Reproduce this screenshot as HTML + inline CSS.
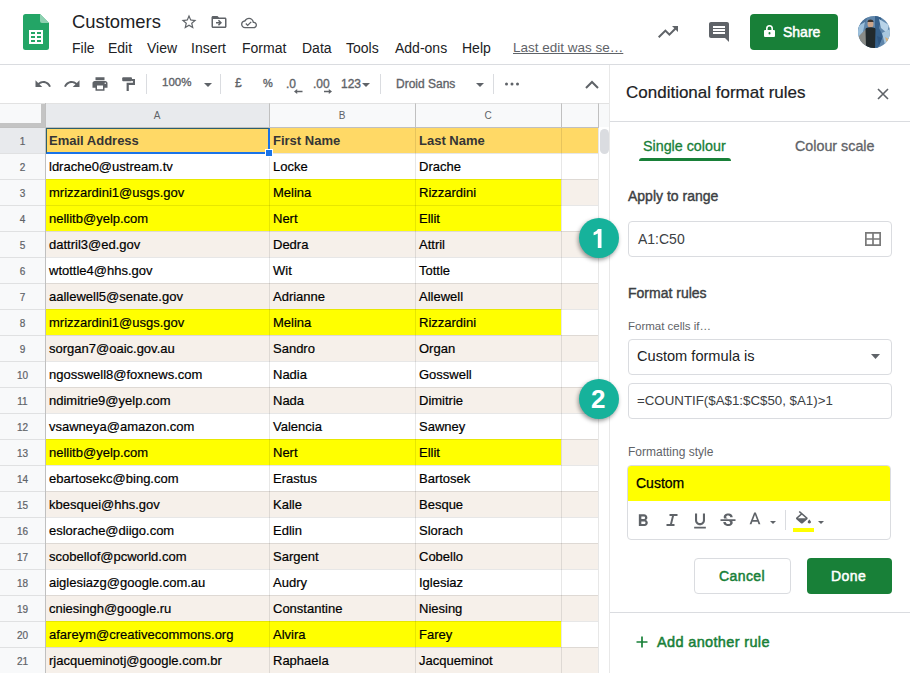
<!DOCTYPE html>
<html><head><meta charset="utf-8">
<style>
*{box-sizing:border-box;margin:0;padding:0}
html,body{width:910px;height:673px;overflow:hidden;background:#fff;font-family:"Liberation Sans",sans-serif;position:relative}
.a{position:absolute;white-space:nowrap}
.menu{top:40px;font-size:14px;color:#202124;line-height:16px}
.tb{position:absolute;color:#5f6368;white-space:nowrap}
.ic{position:absolute;fill:#5f6368}
.cell{position:absolute;font-size:13px;color:#000;line-height:27px;-webkit-text-stroke:0.2px #000;padding-left:4px;white-space:nowrap;overflow:hidden}
.hdr{font-weight:bold;color:#353535;line-height:28px;-webkit-text-stroke:0 #000}
.rh{position:absolute;left:0;width:45px;text-align:center;font-size:10px;color:#5f6368;line-height:29px;-webkit-text-stroke:0.2px #5f6368}
.ch{position:absolute;top:104px;height:23px;text-align:center;font-size:10px;color:#5f6368;line-height:23px}
.box{position:absolute;border:1px solid #dadce0;border-radius:4px;background:#fff}
.lbl{position:absolute;font-size:14px;color:#3c4043;white-space:nowrap;-webkit-text-stroke:0.4px #3c4043;line-height:16px}
.med{-webkit-text-stroke:0.35px currentColor}
</style></head><body>

<!-- Sheets logo -->
<svg class="a" style="left:23px;top:14px" width="26" height="36" viewBox="0 0 26 36">
<path d="M0 2.5Q0 0 2.5 0H17L26 9V33.5Q26 36 23.5 36H2.5Q0 36 0 33.5Z" fill="#23a566"/>
<path d="M17 0L26 9H19Q17 9 17 7Z" fill="#8ed1b1"/>
<rect x="6" y="16" width="14" height="14" fill="#fff"/>
<rect x="8" y="18" width="4" height="2" fill="#23a566"/><rect x="14" y="18" width="4" height="2" fill="#23a566"/>
<rect x="8" y="22" width="4" height="2" fill="#23a566"/><rect x="14" y="22" width="4" height="2" fill="#23a566"/>
<rect x="8" y="26" width="4" height="2" fill="#23a566"/><rect x="14" y="26" width="4" height="2" fill="#23a566"/>
</svg>

<div class="a" style="left:72px;top:11px;font-size:18.4px;color:#202124">Customers</div>
<!-- star / folder / cloud -->
<svg class="ic" style="left:180px;top:13px" width="18" height="18" viewBox="0 0 24 24"><path d="M22 9.24l-7.19-.62L12 2 9.19 8.63 2 9.24l5.46 4.73L5.82 21 12 17.27 18.18 21l-1.63-7.03L22 9.24zM12 15.4l-3.76 2.27 1-4.28-3.32-2.88 4.38-.38L12 6.1l1.71 4.04 4.38.38-3.32 2.88 1 4.28L12 15.4z"/></svg>
<svg class="ic" style="left:210px;top:13px" width="18" height="18" viewBox="0 0 24 24"><path d="M20 6h-8l-2-2H4c-1.1 0-2 .9-2 2v12c0 1.1.9 2 2 2h16c1.1 0 2-.9 2-2V8c0-1.1-.9-2-2-2zm0 12H4V8h16v10zM12.16 12H8v2h4.16l-1.59 1.59L11.99 17 16 13.01 11.99 9l-1.41 1.41z"/></svg>
<svg class="ic" style="left:241px;top:14.5px" width="16" height="16" viewBox="0 0 24 24"><path d="M19.35 10.04C18.67 6.59 15.64 4 12 4 9.11 4 6.6 5.64 5.35 8.04 2.34 8.36 0 10.91 0 14c0 3.31 2.69 6 6 6h13c2.76 0 5-2.24 5-5 0-2.64-2.05-4.78-4.65-4.96zM19 18H6c-2.21 0-4-1.79-4-4 0-2.05 1.53-3.76 3.56-3.97l1.07-.11.5-.95C8.08 7.14 9.94 6 12 6c2.62 0 4.88 1.86 5.39 4.43l.3 1.5 1.53.11c1.56.1 2.78 1.41 2.78 2.96 0 1.65-1.35 3-3 3zm-9-3.82l-2.09-2.09L6.5 13.5 10 17l6.01-6.01-1.41-1.41z"/></svg>

<div class="a menu" style="left:72px">File</div>
<div class="a menu" style="left:108px">Edit</div>
<div class="a menu" style="left:147px">View</div>
<div class="a menu" style="left:191px">Insert</div>
<div class="a menu" style="left:242px">Format</div>
<div class="a menu" style="left:302px">Data</div>
<div class="a menu" style="left:346px">Tools</div>
<div class="a menu" style="left:395px">Add-ons</div>
<div class="a menu" style="left:462px">Help</div>
<div class="a menu" style="left:513px;color:#5f6368;text-decoration:underline;font-size:13.5px">Last edit was se…</div>

<!-- right header icons -->
<svg class="ic" style="left:656px;top:20px" width="24" height="24" viewBox="0 0 24 24"><path d="M16 6l2.29 2.29-4.88 4.88-4-4L2 16.59 3.41 18l6-6 4 4 6.3-6.29L22 12V6z"/></svg>
<svg class="ic" style="left:707px;top:20px" width="24" height="24" viewBox="0 0 24 24"><path d="M21.99 4c0-1.1-.89-2-1.99-2H4c-1.1 0-2 .9-2 2v12c0 1.1.9 2 2 2h14l4 4-.01-18zM18 14H6v-2h12v2zm0-3H6V9h12v2zm0-3H6V6h12v2z"/></svg>

<!-- share -->
<div class="a" style="left:750px;top:14px;width:88px;height:36px;background:#188038;border-radius:4px"></div>
<svg class="a" style="left:764px;top:25px" width="11" height="12" viewBox="0 0 11 12"><path d="M2 5V3.5Q2 0 5.5 0T9 3.5V5H10Q11 5 11 6V11Q11 12 10 12H1Q0 12 0 11V6Q0 5 1 5ZM3.6 5H7.4V3.5Q7.4 1.6 5.5 1.6T3.6 3.5ZM5.5 7Q4.5 7 4.5 8.2T5.5 9.4T6.5 8.2T5.5 7Z" fill="#fff"/></svg>
<div class="a med" style="left:783px;top:24px;font-size:14px;color:#fff;line-height:16px;-webkit-text-stroke:0.5px #fff">Share</div>
<svg class="a" style="left:858px;top:16px" width="32" height="32" viewBox="0 0 32 32">
<defs><clipPath id="av"><circle cx="16" cy="16" r="16"/></clipPath></defs>
<g clip-path="url(#av)">
<rect width="32" height="32" fill="#5f86ab"/>
<path d="M0 0H10L6 10 0 14Z" fill="#4d7399"/>
<path d="M0 10L7 6 5 16 0 22Z" fill="#9cc0dc"/>
<path d="M1 20L8 13 8 32H0Z" fill="#8a8c88"/>
<path d="M17 0H24L21 12 25 20 20 32H17Z" fill="#36618c"/>
<path d="M21 3L31 9 29 17 23 12Z" fill="#b8d3e8"/>
<path d="M24 17L32 13V26L27 29Z" fill="#a9c8df"/>
<path d="M19 20L24 22 21 30Z" fill="#2d5580"/>
<path d="M27 21L31 23 29 27Z" fill="#d8b27c"/>
<ellipse cx="12.5" cy="8" rx="3" ry="3.5" fill="#caa48a"/>
<path d="M9.3 6Q10 3.6 12.5 3.6T15.7 6Z" fill="#3a332e"/>
<path d="M7.5 13Q8 11.4 12.5 11.2T17.5 13L17 32H8Z" fill="#222a2d"/>
</g></svg>

<!-- toolbar line -->
<div class="a" style="left:0;top:64px;width:910px;height:1px;background:#dadce0"></div>

<!-- toolbar -->
<svg class="ic" style="left:34px;top:75px" width="18" height="18" viewBox="0 0 24 24"><path d="M12.5 8c-2.65 0-5.05.99-6.9 2.6L2 7v9h9l-3.62-3.62c1.39-1.16 3.16-1.88 5.12-1.88 3.54 0 6.550 2.31 7.6 5.5l2.37-.78C21.08 11.03 17.15 8 12.5 8z"/></svg>
<svg class="ic" style="left:63px;top:75px" width="18" height="18" viewBox="0 0 24 24"><path d="M18.4 10.6C16.55 8.99 14.15 8 11.5 8c-4.65 0-8.58 3.03-9.96 7.22L3.9 16c1.05-3.19 4.05-5.5 7.6-5.5 1.95 0 3.73.72 5.12 1.88L13 16h9V7l-3.6 3.6z"/></svg>
<svg class="ic" style="left:91px;top:75px" width="18" height="18" viewBox="0 0 24 24"><path d="M19 8H5c-1.66 0-3 1.34-3 3v6h4v4h12v-4h4v-6c0-1.66-1.34-3-3-3zm-3 11H8v-5h8v5zm3-7c-.55 0-1-.45-1-1s.45-1 1-1 1 .45 1 1-.45 1-1 1zm-1-9H6v4h12V3z"/></svg>
<svg class="ic" style="left:121px;top:76px" width="16" height="16" viewBox="0 0 16 16"><rect x="1.2" y="1.2" width="9.8" height="4" rx="1"/><path d="M11 3H14V9H7.8V15H5.6V6.8H11.9V5H11Z"/></svg>
<div class="a" style="left:146px;top:74px;width:1px;height:20px;background:#dadce0"></div>
<div class="tb med" style="left:162px;top:76px;font-size:11.5px">100%</div>
<svg class="ic" style="left:204px;top:83px" width="8" height="4" viewBox="0 0 8 4"><path d="M0 0H8L4 4Z"/></svg>
<div class="a" style="left:220px;top:74px;width:1px;height:20px;background:#dadce0"></div>
<div class="tb med" style="left:235px;top:76px;font-size:12px">£</div>
<div class="tb med" style="left:263px;top:77px;font-size:11px">%</div>
<div class="tb med" style="left:286px;top:77px;font-size:12px">.0</div>
<div class="tb med" style="left:313px;top:77px;font-size:12px">.00</div>
<svg class="ic" style="left:294px;top:89px" width="9" height="5" viewBox="0 0 9 5"><path d="M0 2.5L3.2 0V1.7H8.5V3.3H3.2V5Z"/></svg>
<svg class="ic" style="left:324px;top:89px" width="8" height="5" viewBox="0 0 8 5"><path d="M8 2.5L4.8 0V1.7H0V3.3H4.8V5Z"/></svg>
<div class="tb med" style="left:341px;top:77px;font-size:12px">123</div>
<svg class="ic" style="left:362px;top:83px" width="8" height="4" viewBox="0 0 8 4"><path d="M0 0H8L4 4Z"/></svg>
<div class="a" style="left:380px;top:74px;width:1px;height:20px;background:#dadce0"></div>
<div class="tb med" style="left:396px;top:77px;font-size:12px">Droid Sans</div>
<svg class="ic" style="left:476px;top:83px" width="8" height="4" viewBox="0 0 8 4"><path d="M0 0H8L4 4Z"/></svg>
<div class="a" style="left:493px;top:74px;width:1px;height:20px;background:#dadce0"></div>
<svg class="ic" style="left:505px;top:82px" width="14" height="4" viewBox="0 0 14 4"><circle cx="1.5" cy="2" r="1.5"/><circle cx="7" cy="2" r="1.5"/><circle cx="12.5" cy="2" r="1.5"/></svg>
<svg class="a" style="left:585px;top:80px" width="14" height="9" viewBox="0 0 14 9"><path d="M1 8L7 2L13 8" fill="none" stroke="#5f6368" stroke-width="2"/></svg>

<!-- grid area -->
<div class="a" style="left:0;top:103px;width:610px;height:1px;background:#e2e2e2"></div>
<div class="a" style="left:0;top:104px;width:610px;height:23px;background:#f8f9fa"></div>
<div class="a" style="left:46px;top:104px;width:223px;height:23px;background:#e8eaed"></div>
<div class="ch" style="left:45px;width:224px">A</div>
<div class="ch" style="left:269px;width:146px">B</div>
<div class="ch" style="left:415px;width:146px">C</div>
<div class="a" style="left:45px;top:127px;width:553px;height:26px;background:#ffd966"></div>
<div class="rh" style="top:127px;height:26px;background:#e8eaed">1</div>
<div class="a" style="left:45px;top:153px;width:553px;height:26px;background:#ffffff"></div>
<div class="rh" style="top:153px;height:26px;background:#f8f9fa">2</div>
<div class="a" style="left:45px;top:179px;width:553px;height:26px;background:#f6f0ea"></div>
<div class="a" style="left:45px;top:179px;width:516px;height:26px;background:#ffff00"></div>
<div class="rh" style="top:179px;height:26px;background:#f8f9fa">3</div>
<div class="a" style="left:45px;top:205px;width:553px;height:26px;background:#ffffff"></div>
<div class="a" style="left:45px;top:205px;width:516px;height:26px;background:#ffff00"></div>
<div class="rh" style="top:205px;height:26px;background:#f8f9fa">4</div>
<div class="a" style="left:45px;top:231px;width:553px;height:26px;background:#f6f0ea"></div>
<div class="rh" style="top:231px;height:26px;background:#f8f9fa">5</div>
<div class="a" style="left:45px;top:257px;width:553px;height:26px;background:#ffffff"></div>
<div class="rh" style="top:257px;height:26px;background:#f8f9fa">6</div>
<div class="a" style="left:45px;top:283px;width:553px;height:26px;background:#f6f0ea"></div>
<div class="rh" style="top:283px;height:26px;background:#f8f9fa">7</div>
<div class="a" style="left:45px;top:309px;width:553px;height:26px;background:#ffffff"></div>
<div class="a" style="left:45px;top:309px;width:516px;height:26px;background:#ffff00"></div>
<div class="rh" style="top:309px;height:26px;background:#f8f9fa">8</div>
<div class="a" style="left:45px;top:335px;width:553px;height:26px;background:#f6f0ea"></div>
<div class="rh" style="top:335px;height:26px;background:#f8f9fa">9</div>
<div class="a" style="left:45px;top:361px;width:553px;height:26px;background:#ffffff"></div>
<div class="rh" style="top:361px;height:26px;background:#f8f9fa">10</div>
<div class="a" style="left:45px;top:387px;width:553px;height:26px;background:#f6f0ea"></div>
<div class="rh" style="top:387px;height:26px;background:#f8f9fa">11</div>
<div class="a" style="left:45px;top:413px;width:553px;height:26px;background:#ffffff"></div>
<div class="rh" style="top:413px;height:26px;background:#f8f9fa">12</div>
<div class="a" style="left:45px;top:439px;width:553px;height:26px;background:#f6f0ea"></div>
<div class="a" style="left:45px;top:439px;width:516px;height:26px;background:#ffff00"></div>
<div class="rh" style="top:439px;height:26px;background:#f8f9fa">13</div>
<div class="a" style="left:45px;top:465px;width:553px;height:26px;background:#ffffff"></div>
<div class="rh" style="top:465px;height:26px;background:#f8f9fa">14</div>
<div class="a" style="left:45px;top:491px;width:553px;height:26px;background:#f6f0ea"></div>
<div class="rh" style="top:491px;height:26px;background:#f8f9fa">15</div>
<div class="a" style="left:45px;top:517px;width:553px;height:26px;background:#ffffff"></div>
<div class="rh" style="top:517px;height:26px;background:#f8f9fa">16</div>
<div class="a" style="left:45px;top:543px;width:553px;height:26px;background:#f6f0ea"></div>
<div class="rh" style="top:543px;height:26px;background:#f8f9fa">17</div>
<div class="a" style="left:45px;top:569px;width:553px;height:26px;background:#ffffff"></div>
<div class="rh" style="top:569px;height:26px;background:#f8f9fa">18</div>
<div class="a" style="left:45px;top:595px;width:553px;height:26px;background:#f6f0ea"></div>
<div class="rh" style="top:595px;height:26px;background:#f8f9fa">19</div>
<div class="a" style="left:45px;top:621px;width:553px;height:26px;background:#ffffff"></div>
<div class="a" style="left:45px;top:621px;width:516px;height:26px;background:#ffff00"></div>
<div class="rh" style="top:621px;height:26px;background:#f8f9fa">20</div>
<div class="a" style="left:45px;top:647px;width:553px;height:26px;background:#f6f0ea"></div>
<div class="rh" style="top:647px;height:26px;background:#f8f9fa">21</div>
<div class="a" style="left:0;top:153px;width:598px;height:1px;background:rgba(0,0,0,.095)"></div>
<div class="a" style="left:0;top:179px;width:598px;height:1px;background:rgba(0,0,0,.095)"></div>
<div class="a" style="left:0;top:205px;width:598px;height:1px;background:rgba(0,0,0,.095)"></div>
<div class="a" style="left:0;top:231px;width:598px;height:1px;background:rgba(0,0,0,.095)"></div>
<div class="a" style="left:0;top:257px;width:598px;height:1px;background:rgba(0,0,0,.095)"></div>
<div class="a" style="left:0;top:283px;width:598px;height:1px;background:rgba(0,0,0,.095)"></div>
<div class="a" style="left:0;top:309px;width:598px;height:1px;background:rgba(0,0,0,.095)"></div>
<div class="a" style="left:0;top:335px;width:598px;height:1px;background:rgba(0,0,0,.095)"></div>
<div class="a" style="left:0;top:361px;width:598px;height:1px;background:rgba(0,0,0,.095)"></div>
<div class="a" style="left:0;top:387px;width:598px;height:1px;background:rgba(0,0,0,.095)"></div>
<div class="a" style="left:0;top:413px;width:598px;height:1px;background:rgba(0,0,0,.095)"></div>
<div class="a" style="left:0;top:439px;width:598px;height:1px;background:rgba(0,0,0,.095)"></div>
<div class="a" style="left:0;top:465px;width:598px;height:1px;background:rgba(0,0,0,.095)"></div>
<div class="a" style="left:0;top:491px;width:598px;height:1px;background:rgba(0,0,0,.095)"></div>
<div class="a" style="left:0;top:517px;width:598px;height:1px;background:rgba(0,0,0,.095)"></div>
<div class="a" style="left:0;top:543px;width:598px;height:1px;background:rgba(0,0,0,.095)"></div>
<div class="a" style="left:0;top:569px;width:598px;height:1px;background:rgba(0,0,0,.095)"></div>
<div class="a" style="left:0;top:595px;width:598px;height:1px;background:rgba(0,0,0,.095)"></div>
<div class="a" style="left:0;top:621px;width:598px;height:1px;background:rgba(0,0,0,.095)"></div>
<div class="a" style="left:0;top:647px;width:598px;height:1px;background:rgba(0,0,0,.095)"></div>
<div class="a" style="left:0;top:673px;width:598px;height:1px;background:rgba(0,0,0,.095)"></div>
<div class="a" style="left:269px;top:103px;width:1px;height:570px;background:rgba(0,0,0,.095)"></div>
<div class="a" style="left:415px;top:103px;width:1px;height:570px;background:rgba(0,0,0,.095)"></div>
<div class="a" style="left:561px;top:103px;width:1px;height:570px;background:rgba(0,0,0,.095)"></div>
<div class="a" style="left:598px;top:103px;width:1px;height:570px;background:rgba(0,0,0,.095)"></div>
<div class="a" style="left:45px;top:103px;width:1px;height:570px;background:#c0c0c0"></div>
<div class="cell hdr" style="left:45px;top:127px;width:224px;height:26px">Email Address</div>
<div class="cell hdr" style="left:269px;top:127px;width:146px;height:26px">First Name</div>
<div class="cell hdr" style="left:415px;top:127px;width:146px;height:26px">Last Name</div>
<div class="cell" style="left:45px;top:153px;width:224px;height:26px">ldrache0@ustream.tv</div>
<div class="cell" style="left:269px;top:153px;width:146px;height:26px">Locke</div>
<div class="cell" style="left:415px;top:153px;width:146px;height:26px">Drache</div>
<div class="cell" style="left:45px;top:179px;width:224px;height:26px">mrizzardini1@usgs.gov</div>
<div class="cell" style="left:269px;top:179px;width:146px;height:26px">Melina</div>
<div class="cell" style="left:415px;top:179px;width:146px;height:26px">Rizzardini</div>
<div class="cell" style="left:45px;top:205px;width:224px;height:26px">nellitb@yelp.com</div>
<div class="cell" style="left:269px;top:205px;width:146px;height:26px">Nert</div>
<div class="cell" style="left:415px;top:205px;width:146px;height:26px">Ellit</div>
<div class="cell" style="left:45px;top:231px;width:224px;height:26px">dattril3@ed.gov</div>
<div class="cell" style="left:269px;top:231px;width:146px;height:26px">Dedra</div>
<div class="cell" style="left:415px;top:231px;width:146px;height:26px">Attril</div>
<div class="cell" style="left:45px;top:257px;width:224px;height:26px">wtottle4@hhs.gov</div>
<div class="cell" style="left:269px;top:257px;width:146px;height:26px">Wit</div>
<div class="cell" style="left:415px;top:257px;width:146px;height:26px">Tottle</div>
<div class="cell" style="left:45px;top:283px;width:224px;height:26px">aallewell5@senate.gov</div>
<div class="cell" style="left:269px;top:283px;width:146px;height:26px">Adrianne</div>
<div class="cell" style="left:415px;top:283px;width:146px;height:26px">Allewell</div>
<div class="cell" style="left:45px;top:309px;width:224px;height:26px">mrizzardini1@usgs.gov</div>
<div class="cell" style="left:269px;top:309px;width:146px;height:26px">Melina</div>
<div class="cell" style="left:415px;top:309px;width:146px;height:26px">Rizzardini</div>
<div class="cell" style="left:45px;top:335px;width:224px;height:26px">sorgan7@oaic.gov.au</div>
<div class="cell" style="left:269px;top:335px;width:146px;height:26px">Sandro</div>
<div class="cell" style="left:415px;top:335px;width:146px;height:26px">Organ</div>
<div class="cell" style="left:45px;top:361px;width:224px;height:26px">ngosswell8@foxnews.com</div>
<div class="cell" style="left:269px;top:361px;width:146px;height:26px">Nadia</div>
<div class="cell" style="left:415px;top:361px;width:146px;height:26px">Gosswell</div>
<div class="cell" style="left:45px;top:387px;width:224px;height:26px">ndimitrie9@yelp.com</div>
<div class="cell" style="left:269px;top:387px;width:146px;height:26px">Nada</div>
<div class="cell" style="left:415px;top:387px;width:146px;height:26px">Dimitrie</div>
<div class="cell" style="left:45px;top:413px;width:224px;height:26px">vsawneya@amazon.com</div>
<div class="cell" style="left:269px;top:413px;width:146px;height:26px">Valencia</div>
<div class="cell" style="left:415px;top:413px;width:146px;height:26px">Sawney</div>
<div class="cell" style="left:45px;top:439px;width:224px;height:26px">nellitb@yelp.com</div>
<div class="cell" style="left:269px;top:439px;width:146px;height:26px">Nert</div>
<div class="cell" style="left:415px;top:439px;width:146px;height:26px">Ellit</div>
<div class="cell" style="left:45px;top:465px;width:224px;height:26px">ebartosekc@bing.com</div>
<div class="cell" style="left:269px;top:465px;width:146px;height:26px">Erastus</div>
<div class="cell" style="left:415px;top:465px;width:146px;height:26px">Bartosek</div>
<div class="cell" style="left:45px;top:491px;width:224px;height:26px">kbesquei@hhs.gov</div>
<div class="cell" style="left:269px;top:491px;width:146px;height:26px">Kalle</div>
<div class="cell" style="left:415px;top:491px;width:146px;height:26px">Besque</div>
<div class="cell" style="left:45px;top:517px;width:224px;height:26px">eslorache@diigo.com</div>
<div class="cell" style="left:269px;top:517px;width:146px;height:26px">Edlin</div>
<div class="cell" style="left:415px;top:517px;width:146px;height:26px">Slorach</div>
<div class="cell" style="left:45px;top:543px;width:224px;height:26px">scobellof@pcworld.com</div>
<div class="cell" style="left:269px;top:543px;width:146px;height:26px">Sargent</div>
<div class="cell" style="left:415px;top:543px;width:146px;height:26px">Cobello</div>
<div class="cell" style="left:45px;top:569px;width:224px;height:26px">aiglesiazg@google.com.au</div>
<div class="cell" style="left:269px;top:569px;width:146px;height:26px">Audry</div>
<div class="cell" style="left:415px;top:569px;width:146px;height:26px">Iglesiaz</div>
<div class="cell" style="left:45px;top:595px;width:224px;height:26px">cniesingh@google.ru</div>
<div class="cell" style="left:269px;top:595px;width:146px;height:26px">Constantine</div>
<div class="cell" style="left:415px;top:595px;width:146px;height:26px">Niesing</div>
<div class="cell" style="left:45px;top:621px;width:224px;height:26px">afareym@creativecommons.org</div>
<div class="cell" style="left:269px;top:621px;width:146px;height:26px">Alvira</div>
<div class="cell" style="left:415px;top:621px;width:146px;height:26px">Farey</div>
<div class="cell" style="left:45px;top:647px;width:224px;height:26px">rjacqueminotj@google.com.br</div>
<div class="cell" style="left:269px;top:647px;width:146px;height:26px">Raphaela</div>
<div class="cell" style="left:415px;top:647px;width:146px;height:26px">Jacqueminot</div>
<!-- freeze bars -->
<div class="a" style="left:41px;top:104px;width:4px;height:23px;background:#c4c4c4"></div>
<div class="a" style="left:0;top:123px;width:45px;height:4px;background:#c4c4c4"></div>
<div class="a" style="left:269px;top:104px;width:1px;height:23px;background:#c0c0c0"></div>
<div class="a" style="left:415px;top:104px;width:1px;height:23px;background:#c0c0c0"></div>
<div class="a" style="left:561px;top:104px;width:1px;height:23px;background:#c0c0c0"></div>
<div class="a" style="left:598px;top:104px;width:1px;height:23px;background:#c0c0c0"></div>
<div class="a" style="left:0;top:127px;width:610px;height:1px;background:#c0c0c0"></div>
<!-- selection -->
<div class="a" style="left:46px;top:128px;width:224px;height:26px;border-style:solid;border-color:#2d5f6b #1a73e8 #1a73e8 #2d5f6b;border-width:1.5px 2px 2px 1.5px"></div>
<div class="a" style="left:265px;top:149px;width:8px;height:8px;background:#1a73e8;border:1px solid #fff"></div>
<!-- scrollbar -->
<div class="a" style="left:599px;top:127px;width:11px;height:546px;background:#fff"></div>
<div class="a" style="left:600px;top:129px;width:9px;height:25px;background:#dadce0;border-radius:5px"></div>

<!-- panel -->
<div class="a" style="left:609px;top:65px;width:301px;height:608px;background:#fff;border-left:1px solid #e8e8e8"></div>
<div class="a" style="left:626px;top:83px;font-size:17px;color:#202124;line-height:20px;-webkit-text-stroke:0.2px #202124">Conditional format rules</div>
<svg class="a" style="left:877px;top:88px" width="12" height="12" viewBox="0 0 12 12"><path d="M1 1L11 11M11 1L1 11" stroke="#5f6368" stroke-width="1.6"/></svg>
<div class="a" style="left:610px;top:121px;width:300px;height:1px;background:#dadce0"></div>
<div class="a" style="left:643px;top:138px;font-size:14.3px;color:#188038;line-height:16px;-webkit-text-stroke:0.3px #188038">Single colour</div>
<div class="a" style="left:639px;top:158px;width:92px;height:3px;background:#188038;border-radius:3px 3px 0 0"></div>
<div class="a" style="left:795px;top:138px;font-size:14.3px;color:#5f6368;line-height:16px;-webkit-text-stroke:0.3px #5f6368">Colour scale</div>

<div class="lbl" style="left:628px;top:188px">Apply to range</div>
<div class="box" style="left:628px;top:221px;width:264px;height:36px"></div>
<div class="a" style="left:638px;top:231px;font-size:14px;color:#3c4043;line-height:16px">A1:C50</div>
<svg class="a" style="left:865px;top:232px" width="16" height="14" viewBox="0 0 16 14"><path d="M.85 .85H15.15V13.15H.85ZM8 .85V13.15M.85 7H15.15" fill="none" stroke="#7a7a7a" stroke-width="1.7"/></svg>

<div class="lbl" style="left:628px;top:285px">Format rules</div>
<div class="a" style="left:628px;top:319px;font-size:11.5px;color:#5f6368;line-height:14px">Format cells if…</div>
<div class="box" style="left:628px;top:339px;width:264px;height:36px"></div>
<div class="a" style="left:637px;top:348px;font-size:14.6px;color:#202124;line-height:17px">Custom formula is</div>
<svg class="ic" style="left:871px;top:354px" width="9" height="5" viewBox="0 0 9 5"><path d="M0 0H9L4.5 5Z"/></svg>
<div class="box" style="left:628px;top:383px;width:264px;height:36px"></div>
<div class="a" style="left:637px;top:393px;font-size:13.3px;color:#3c4043;line-height:16px">=COUNTIF($A$1:$C$50, $A1)>1</div>

<div class="a" style="left:628px;top:445px;font-size:12px;color:#5f6368;line-height:14px">Formatting style</div>
<div class="box" style="left:627px;top:465px;width:264px;height:75px;overflow:hidden">
  <div class="a" style="left:0;top:0;width:262px;height:35px;background:#ffff00"></div>
</div>
<div class="a" style="left:636px;top:475px;font-size:14px;color:#000;line-height:16px;-webkit-text-stroke:0.25px #000">Custom</div>
<!-- style toolbar -->
<svg class="ic" style="left:633px;top:511px" width="20" height="20" viewBox="0 0 24 24"><path d="M15.6 10.79c.97-.67 1.65-1.77 1.65-2.79 0-2.26-1.75-4-4-4H7v14h7.04c2.09 0 3.710-1.700 3.710-3.79 0-1.520-.860-2.820-2.150-3.420zM10 6.5h3c.83 0 1.5.67 1.5 1.5s-.67 1.5-1.5 1.5h-3v-3zm3.5 9H10v-3h3.5c.83 0 1.5.67 1.5 1.5s-.67 1.5-1.5 1.5z"/></svg>
<svg class="ic" style="left:665px;top:514px" width="14" height="12" viewBox="0 0 14 12"><path d="M4.5 0V2H7L5 10H1.5V12H9.5V10H7L9 2H12.5V0Z"/></svg>
<svg class="ic" style="left:690px;top:511px" width="20" height="20" viewBox="0 0 24 24"><path d="M12 17c3.31 0 6-2.69 6-6V3h-2.5v8c0 1.93-1.57 3.5-3.5 3.5S8.5 12.93 8.5 11V3H6v8c0 3.31 2.69 6 6 6zm-7 2v2h14v-2H5z"/></svg>
<svg class="ic" style="left:718px;top:511px" width="20" height="20" viewBox="0 0 24 24"><path d="M7.24 8.75c-.26-.48-.39-1.03-.39-1.67 0-.61.13-1.16.4-1.67.26-.5.63-.93 1.11-1.29.48-.35 1.05-.63 1.7-.83.66-.19 1.39-.29 2.18-.29.81 0 1.54.11 2.21.34.66.22 1.23.54 1.69.94.47.4.83.88 1.08 1.43.25.55.38 1.15.38 1.81h-3.01c0-.31-.05-.59-.15-.85-.09-.27-.24-.49-.44-.68-.2-.19-.45-.33-.75-.44-.3-.1-.66-.16-1.060-.16-.39 0-.74.04-1.03.13-.29.09-.53.21-.72.36-.19.16-.34.34-.44.55-.1.21-.15.43-.15.66 0 .48.25.88.74 1.21.38.25.77.48 1.41.7H7.39c-.05-.08-.11-.17-.15-.25zM21 12v-2H3v2h9.62c.18.07.4.14.55.2.37.17.66.34.87.51.21.17.35.36.43.57.07.2.11.43.11.69 0 .23-.05.45-.14.66-.09.2-.23.38-.42.53-.19.15-.42.26-.71.35-.29.08-.63.13-1.01.13-.43 0-.83-.04-1.18-.13s-.66-.23-.91-.42c-.25-.19-.45-.44-.59-.75-.14-.31-.25-.76-.25-1.21H6.4c0 .55.08 1.13.24 1.58.16.45.37.85.65 1.210.28.35.6.66.98.92.37.26.78.48 1.22.65.44.17.9.3 1.38.39.48.08.96.13 1.44.13.8 0 1.53-.09 2.18-.28s1.21-.45 1.670-.790c.46-.34.82-.77 1.07-1.27s.38-1.07.38-1.71c0-.6-.1-1.14-.31-1.61-.05-.11-.11-.23-.17-.33H21z"/></svg>
<svg class="ic" style="left:745px;top:510px" width="20" height="20" viewBox="0 0 24 24"><path d="M11 3L5.5 17h2.25l1.12-3h6.25l1.12 3h2.25L13 3h-2zm-1.38 9L12 5.67 14.38 12H9.62z"/></svg>
<svg class="ic" style="left:770px;top:521px" width="6" height="3" viewBox="0 0 6 3"><path d="M0 0H6L3 3Z"/></svg>
<div class="a" style="left:785px;top:510px;width:1px;height:20px;background:#dadce0"></div>
<svg class="ic" style="left:795.5px;top:511.3px" width="15" height="12.5" viewBox="3 0 18 17" preserveAspectRatio="none"><path d="M16.56 8.94L7.62 0 6.21 1.41l2.38 2.38-5.15 5.15c-.59.59-.59 1.54 0 2.12l5.5 5.5c.29.29.68.44 1.06.44s.77-.15 1.06-.44l5.5-5.5c.59-.58.59-1.53 0-2.12zM5.21 10L10 5.210 14.79 10H5.21zM19 11.5s-2 2.17-2 3.5c0 1.1.9 2 2 2s2-.9 2-2c0-1.33-2-3.5-2-3.5z"/></svg>
<div class="a" style="left:793px;top:528px;width:21px;height:4px;background:#ffff00"></div>
<svg class="ic" style="left:818px;top:521px" width="6" height="3" viewBox="0 0 6 3"><path d="M0 0H6L3 3Z"/></svg>

<div class="box" style="left:694px;top:558px;width:97px;height:36px"></div>
<div class="a" style="left:719px;top:568px;font-size:14px;color:#188038;line-height:16px;letter-spacing:0.4px;-webkit-text-stroke:0.5px #188038">Cancel</div>
<div class="a" style="left:807px;top:558px;width:85px;height:36px;background:#188038;border-radius:4px"></div>
<div class="a" style="left:831px;top:568px;font-size:14px;color:#fff;line-height:16px;letter-spacing:0.4px;-webkit-text-stroke:0.5px #fff">Done</div>

<div class="a" style="left:610px;top:612px;width:300px;height:1px;background:#dadce0"></div>
<svg class="a" style="left:636px;top:636px" width="12" height="12" viewBox="0 0 12 12"><path d="M6 0.5V11.5M0.5 6H11.5" stroke="#188038" stroke-width="1.7"/></svg>
<div class="a" style="left:657px;top:634px;font-size:14.5px;color:#188038;line-height:16px;letter-spacing:0.35px;-webkit-text-stroke:0.5px #188038">Add another rule</div>

<!-- badges -->
<div class="a" style="left:579px;top:218px;width:40px;height:40px;border-radius:50%;background:#16b29b;box-shadow:-1px 2px 4px rgba(0,0,0,.4)"></div>
<svg class="a" style="left:593px;top:229px" width="10" height="20" viewBox="0 0 10 20"><path d="M5 0H8.5V19H4.8V4.6Q3 5.8 .6 6.2V3.4Q3.5 2.6 5 0Z" fill="#fff"/></svg>
<div class="a" style="left:579px;top:379px;width:40px;height:40px;border-radius:50%;background:#16b29b;box-shadow:-1px 2px 4px rgba(0,0,0,.4)"></div>
<div class="a" style="left:591px;top:387px;font-size:26px;font-weight:bold;color:#fff;line-height:24px">2</div>

</body></html>
